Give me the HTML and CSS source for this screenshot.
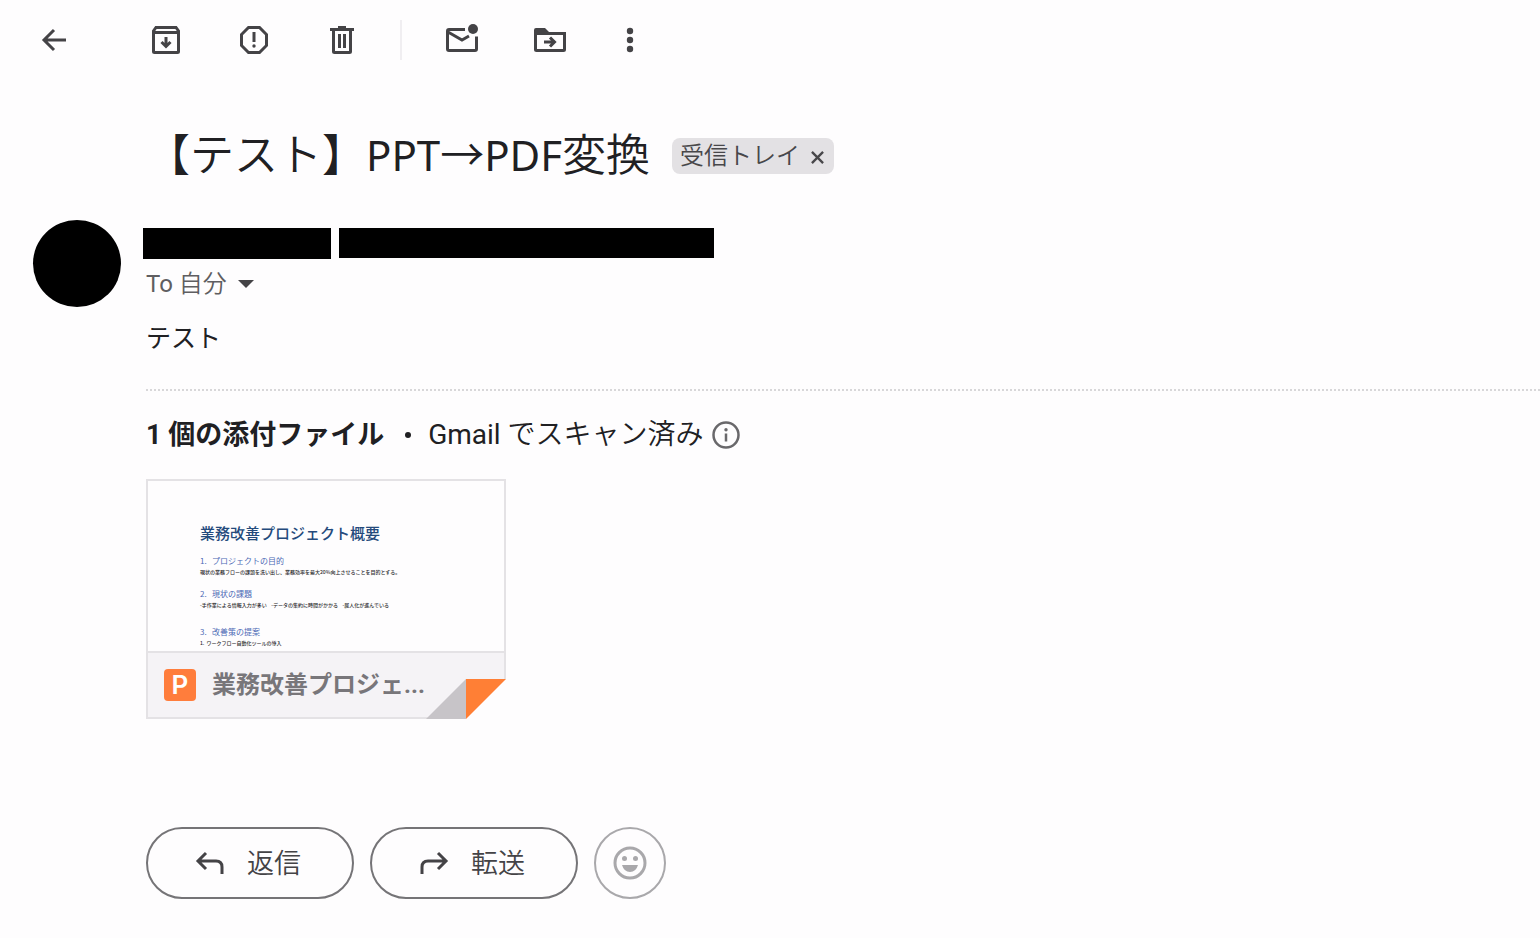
FILE: index.html
```html
<!DOCTYPE html>
<html lang="ja">
<head>
<meta charset="utf-8">
<meta name="viewport" content="width=device-width, initial-scale=1">
<title>【テスト】PPT→PDF変換</title>
<link rel="stylesheet" href="styles.css">
</head>
<body>
<header class="toolbar">
  <button class="icon-btn back" aria-label="戻る"><svg viewBox="0 0 40 40"><path d="M32 20H10M20 10L10 20L20 30" class="line"/></svg></button>
  <button class="icon-btn" aria-label="アーカイブ"><svg viewBox="0 0 40 40"><path d="M10 7.500H30L32.500 11V31.500Q32.500 32.500 31.500 32.500H8.500Q7.500 32.500 7.500 31.500V11Z" class="line"/><path d="M7.500 12.500H32.500M20 17V26M15.500 22L20 26.500L24.500 22" class="line"/></svg></button>
  <button class="icon-btn" aria-label="迷惑メールを報告"><svg viewBox="0 0 40 40"><path d="M14.500 7.500H25.500L32.500 14.500V25.500L25.500 32.500H14.500L7.500 25.500V14.500Z" class="line"/><path d="M20 12V22" class="line"/><circle cx="20" cy="26" r="1.700"/></svg></button>
  <button class="icon-btn" aria-label="削除"><svg viewBox="0 0 40 40"><path d="M8 9.500H32M11.500 10V31.500Q11.500 32.500 12.500 32.500H27.500Q28.500 32.500 28.500 31.500V10M17.500 14V28M22.500 14V28" class="line"/><path d="M16 6H24V9H16Z"/></svg></button>
  <span class="divider"></span>
  <button class="icon-btn" aria-label="未読にする"><svg viewBox="0 0 40 40"><path d="M23 9.500H7Q5.500 9.500 5.500 11V29Q5.500 30.500 7 30.500H33Q34.500 30.500 34.500 29V16.500" class="line"/><path d="M6 12L20 20L27 16" class="line"/><circle cx="31" cy="9" r="5"/></svg></button>
  <button class="icon-btn" aria-label="移動"><svg viewBox="0 0 40 40"><path d="M5.500 13.500H34.500V29.500Q34.500 30.500 33.500 30.500H6.500Q5.500 30.500 5.500 29.500Z" class="line"/><path d="M4 14V10Q4 8 6 8H15L19 12H34Q36 12 36 14V15H4Z"/><path d="M14 22H24M20 17.500L24.500 22L20 26.500" class="line"/></svg></button>
  <button class="icon-btn more" aria-label="その他"><svg viewBox="0 0 40 40"><circle cx="20" cy="11" r="3.200"/><circle cx="20" cy="20" r="3.200"/><circle cx="20" cy="29" r="3.200"/></svg></button>
</header>
<main>
  <div class="subject">
    <h1>【テスト】<span class="latin">PPT</span>→<span class="latin">PDF</span>変換</h1>
    <span class="label">受信トレイ<button aria-label="ラベルを削除"><svg viewBox="0 0 14 14"><path d="M1 1L13 13M13 1L1 13" class="line"/></svg></button></span>
  </div>
  <article class="message">
    <div class="avatar"></div>
    <div class="content">
      <div class="sender"><span class="name"></span><span class="address"></span></div>
      <button class="recipient"><span><span class="regular">To</span> 自分</span><svg viewBox="0 0 16 8"><path d="M0 0H16L8 8Z"/></svg></button>
      <p class="text">テスト</p>
      <section class="attachments">
        <div class="summary"><strong>1 個の添付ファイル</strong><span class="bullet"></span><span class="scan"><span class="regular">Gmail</span> でスキャン済み</span>
          <svg class="info" viewBox="0 0 28 28"><circle cx="14" cy="14" r="12.500" class="line"/><path d="M14 12.500V20.500" class="line"/><circle cx="14" cy="8.700" r="1.700"/></svg>
        </div>
        <a class="file" href="#">
          <div class="preview">
            <h2>業務改善プロジェクト概要</h2>
            <h3><span>1.</span>プロジェクトの目的</h3>
            <p>現状の業務フローの課題を洗い出し、業務効率を最大20%向上させることを目的とする。</p>
            <h3><span>2.</span>現状の課題</h3>
            <p>-手作業による情報入力が多い&nbsp;&nbsp;&nbsp; -データの集約に時間がかかる&nbsp;&nbsp;&nbsp; -属人化が進んでいる</p>
            <h3 class="last"><span>3.</span>改善策の提案</h3>
            <p>1.&nbsp; ワークフロー自動化ツールの導入</p>
          </div>
          <div class="file-bar"><span class="ppt">P</span><span class="file-name">業務改善プロジェ...</span></div>
          <svg class="fold" viewBox="0 0 80 40"><path d="M40 0H80V40H40Z" class="paper"/><path d="M0 40L40 0V40Z" class="shade"/><path d="M40 0H80L40 40Z" class="orange"/></svg>
        </a>
      </section>
      <div class="actions">
        <button class="pill"><svg viewBox="0 0 30 24"><path d="M11 2L3 10L11 18M3 10H21Q27 10 27 16V23" class="line"/></svg><span>返信</span></button>
        <button class="pill"><svg viewBox="0 0 30 24"><path d="M19 2L27 10L19 18M27 10H9Q3 10 3 16V23" class="line"/></svg><span>転送</span></button>
        <button class="emoji" aria-label="リアクション"><svg viewBox="0 0 34 34"><circle cx="17" cy="17" r="15" class="line"/><circle cx="11.500" cy="12.500" r="2.500"/><circle cx="22.500" cy="12.500" r="2.500"/><path d="M9 19H25Q23 26 17 26Q11 26 9 19Z"/></svg></button>
      </div>
    </div>
  </article>
</main>
</body>
</html>
```
FILE: styles.css
```css
* { box-sizing: border-box; }
body {
  margin: 0;
  background: #fefdfe;
  color: #202023;
  font-family: Roboto, "Noto Sans CJK JP", sans-serif;
  overflow-x: hidden;
}
h1, h2, h3, p { margin: 0; font-weight: 400; }
button { padding: 0; border: 0; background: none; color: inherit; font: inherit; cursor: pointer; }
svg { display: block; flex: none; fill: currentColor; }
.line { fill: none; stroke: currentColor; stroke-width: 3; }
.regular { font-weight: 400; }

.toolbar { display: flex; align-items: center; gap: 48px; height: 80px; padding-left: 34px; color: #444346; }
.icon-btn, .icon-btn svg { width: 40px; height: 40px; }
.back { margin-right: 24px; }
.divider { width: 2px; height: 40px; margin: 0 -8px 0 -10px; background: #f0eef1; }
.more { margin-left: -8px; }

.subject { display: flex; align-items: center; gap: 22px; padding: 42px 0 0 146px; }
h1 { padding-bottom: 8px; font: 350 44px/60px "Noto Sans CJK JP", sans-serif; }
.latin { font-family: "Noto Sans", sans-serif; font-size: 42px; font-weight: 400; line-height: 1; }
.label {
  display: flex; align-items: center; gap: 11px;
  height: 36px; padding: 0 10px 0 8px;
  border-radius: 8px; background: #e3e1e4; color: #48474a; font-size: 24px; font-weight: 350; line-height: 36px;
}
.label svg { width: 13px; height: 13px; margin-top: 3px; }
.label .line { stroke-width: 2.5; }

.message { display: flex; gap: 25px; padding: 30px 0 0 33px; }
.avatar { flex: none; width: 88px; height: 87px; border-radius: 50%; background: #000; }
.content { flex: 1; min-width: 0; }
.sender { display: flex; gap: 8px; margin: 8px 0 0 -3px; }
.name { width: 188px; height: 31px; background: #000; }
.address { width: 375px; height: 30px; background: #000; }
.recipient { display: flex; align-items: center; gap: 11px; margin-top: 7px; color: #5f5e61; font-size: 24px; font-weight: 350; line-height: 36px; }
.recipient svg { width: 16px; height: 8px; color: #444346; }
.text { margin-top: 19px; font-size: 25px; line-height: 36px; }

.attachments { margin-top: 32px; padding-top: 24px; border-top: 2px dotted #d8d7d9; }
.summary { display: flex; align-items: center; font-size: 27px; line-height: 40px; }
.scan { font-size: 28px; font-weight: 350; }
.bullet { width: 6px; height: 6px; margin: 0 17px 0 21px; border-radius: 50%; background: #202023; }
.info { width: 28px; height: 28px; margin-left: 8px; color: #69686b; }
.info .line { stroke-width: 2.5; }
.file { display: block; position: relative; width: 360px; margin-top: 24px; border: 2px solid #e4e2e5; color: #78767a; text-decoration: none; }
.preview { height: 170px; padding: 42px 0 0 52px; overflow: hidden; font-family: "Noto Sans CJK JP", sans-serif; white-space: nowrap; }
.preview h2 { color: #244a7c; font-size: 15px; font-weight: 500; line-height: 20px; }
.preview h3 { display: flex; margin-top: 11px; color: #4c69b5; font-size: 8px; line-height: 14px; }
.preview h3.last { margin-top: 16px; }
.preview h3 span { width: 12px; }
.preview p { color: #29282b; font-size: 5px; font-weight: 500; line-height: 8px; }
.file-bar { display: flex; align-items: center; gap: 16px; height: 66px; padding-left: 16px; border-top: 2px solid #e4e2e5; background: #f5f3f6; font-size: 24px; font-weight: 700; }
.file-name { padding-bottom: 6px; }
.ppt { width: 32px; height: 32px; border-radius: 4px; background: #ff7d3c; color: #fff; font: 600 26px/32px Inter, sans-serif; text-align: center; }
.fold { position: absolute; right: -2px; bottom: -2px; width: 80px; height: 40px; }
.paper { fill: #fefdfe; }
.shade { fill: #c7c4c8; }
.orange { fill: #ff7f35; }

.actions { display: flex; gap: 16px; margin-top: 108px; color: #444346; }
.pill { display: flex; align-items: center; justify-content: center; gap: 22px; width: 208px; height: 72px; padding-right: 4px; border: 2px solid #757477; border-radius: 36px; font-size: 27px; font-weight: 350; }
.pill svg { width: 30px; height: 24px; }
.pill span { padding-bottom: 4px; }
.emoji { display: grid; place-items: center; width: 72px; height: 72px; border: 2px solid #a9a8ab; border-radius: 50%; color: #a9a8ab; }
.emoji svg { width: 34px; height: 34px; }
```
